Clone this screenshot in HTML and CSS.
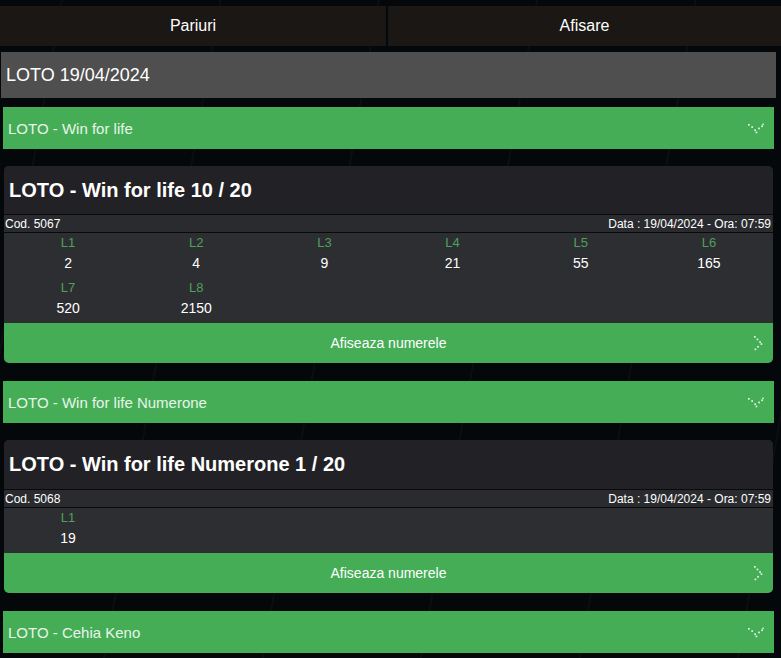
FILE: index.html
```html
<!DOCTYPE html>
<html lang="ro">
<head>
<meta charset="utf-8">
<title>LOTO</title>
<link rel="stylesheet" href="styles.css">
</head>
<body>
<div class="page">
  <nav class="tabs">
    <div class="tab">Pariuri</div>
    <div class="tab">Afisare</div>
  </nav>

  <div class="date-header">LOTO 19/04/2024</div>

  <div class="group group-first">
    <span>LOTO - Win for life</span>
    <svg class="chev-down" width="17" height="11" viewBox="0 0 17 11"><g fill="#e2f6e5"><rect x="1" y="1" width="1.7" height="1.7"/><rect x="4.3" y="3.2" width="1.7" height="1.7"/><rect x="7.3" y="6.4" width="1.7" height="1.7"/><rect x="8.6" y="8.6" width="1.7" height="1.7"/><rect x="11.2" y="4.6" width="1.7" height="1.7"/><rect x="14.3" y="2.4" width="1.7" height="1.7"/><rect x="15.3" y="0.6" width="1.5" height="1.5"/></g></svg>
  </div>

  <section class="card">
    <h2 class="card-title">LOTO - Win for life 10 / 20</h2>
    <div class="info"><span>Cod. 5067</span><span>Data : 19/04/2024 - Ora: 07:59</span></div>
    <div class="grid">
      <div class="cell"><div class="lbl">L1</div><div class="val">2</div></div>
      <div class="cell"><div class="lbl">L2</div><div class="val">4</div></div>
      <div class="cell"><div class="lbl">L3</div><div class="val">9</div></div>
      <div class="cell"><div class="lbl">L4</div><div class="val">21</div></div>
      <div class="cell"><div class="lbl">L5</div><div class="val">55</div></div>
      <div class="cell"><div class="lbl">L6</div><div class="val">165</div></div>
      <div class="cell"><div class="lbl">L7</div><div class="val">520</div></div>
      <div class="cell"><div class="lbl">L8</div><div class="val">2150</div></div>
    </div>
    <div class="show-btn">
      <span class="btn-text">Afiseaza numerele</span>
      <svg class="chev-right" width="10" height="16" viewBox="0 0 10 16"><g fill="#e2f6e5"><rect x="1" y="1" width="1.7" height="1.7"/><rect x="3.6" y="3.6" width="1.7" height="1.7"/><rect x="6.2" y="6.2" width="1.7" height="1.7"/><rect x="7.6" y="8.2" width="1.7" height="1.7"/><rect x="4.2" y="10.9" width="1.7" height="1.7"/><rect x="1.6" y="13.5" width="1.7" height="1.7"/></g></svg>
    </div>
  </section>

  <div class="group group-after-card">
    <span>LOTO - Win for life Numerone</span>
    <svg class="chev-down" width="17" height="11" viewBox="0 0 17 11"><g fill="#e2f6e5"><rect x="1" y="1" width="1.7" height="1.7"/><rect x="4.3" y="3.2" width="1.7" height="1.7"/><rect x="7.3" y="6.4" width="1.7" height="1.7"/><rect x="8.6" y="8.6" width="1.7" height="1.7"/><rect x="11.2" y="4.6" width="1.7" height="1.7"/><rect x="14.3" y="2.4" width="1.7" height="1.7"/><rect x="15.3" y="0.6" width="1.5" height="1.5"/></g></svg>
  </div>

  <section class="card">
    <h2 class="card-title card-title-tall">LOTO - Win for life Numerone 1 / 20</h2>
    <div class="info"><span>Cod. 5068</span><span>Data : 19/04/2024 - Ora: 07:59</span></div>
    <div class="grid">
      <div class="cell"><div class="lbl">L1</div><div class="val">19</div></div>
    </div>
    <div class="show-btn">
      <span class="btn-text">Afiseaza numerele</span>
      <svg class="chev-right" width="10" height="16" viewBox="0 0 10 16"><g fill="#e2f6e5"><rect x="1" y="1" width="1.7" height="1.7"/><rect x="3.6" y="3.6" width="1.7" height="1.7"/><rect x="6.2" y="6.2" width="1.7" height="1.7"/><rect x="7.6" y="8.2" width="1.7" height="1.7"/><rect x="4.2" y="10.9" width="1.7" height="1.7"/><rect x="1.6" y="13.5" width="1.7" height="1.7"/></g></svg>
    </div>
  </section>

  <div class="group group-last">
    <span>LOTO - Cehia Keno</span>
    <svg class="chev-down" width="17" height="11" viewBox="0 0 17 11"><g fill="#e2f6e5"><rect x="1" y="1" width="1.7" height="1.7"/><rect x="4.3" y="3.2" width="1.7" height="1.7"/><rect x="7.3" y="6.4" width="1.7" height="1.7"/><rect x="8.6" y="8.6" width="1.7" height="1.7"/><rect x="11.2" y="4.6" width="1.7" height="1.7"/><rect x="14.3" y="2.4" width="1.7" height="1.7"/><rect x="15.3" y="0.6" width="1.5" height="1.5"/></g></svg>
  </div>
</div>
</body>
</html>
```

FILE: styles.css
```css
* { box-sizing: border-box; }

html, body {
  margin: 0;
  padding: 0;
}

body {
  background-color: #05080b;
  background-image:
    repeating-linear-gradient(100deg, transparent 0 60px, rgba(255,255,255,0.025) 60px 62px, transparent 62px 156px);
  font-family: "Liberation Sans", Arial, sans-serif;
  color: #ffffff;
  width: 781px;
  height: 658px;
  overflow: hidden;
}

.page {
  padding-top: 6px;
}

.tabs {
  display: grid;
  grid-template-columns: 386px 1fr;
  gap: 2px;
  height: 40px;
}

.tab {
  background: #1b1714;
  display: flex;
  align-items: center;
  justify-content: center;
  font-size: 16px;
  color: #ffffff;
}

.date-header {
  margin: 6px 5px 0 1px;
  height: 46px;
  background: #4f4f4f;
  display: flex;
  align-items: center;
  padding-left: 5px;
  font-size: 18px;
  color: #ffffff;
}

.group {
  margin: 0 7px 0 3px;
  height: 42px;
  background: #46ad57;
  display: flex;
  align-items: center;
  justify-content: space-between;
  padding: 0 10px 0 5px;
  font-size: 15px;
  color: #e8f5ea;
}

.group-first { margin-top: 9px; }
.group-after-card { margin-top: 18px; }
.group-last { margin-top: 18px; }

.chev-down { display: block; margin-top: 1px; }

.card {
  margin: 17px 8px 0 4px;
  background: #2d2e32;
  border-radius: 5px;
  overflow: hidden;
}

.card-title {
  margin: 0;
  height: 48px;
  background: #222226;
  display: flex;
  align-items: center;
  padding-left: 5px;
  font-size: 20px;
  font-weight: bold;
  color: #ffffff;
}

.card-title-tall {
  height: 49px;
}

.info {
  height: 19px;
  border-top: 1px solid #0a0a0b;
  border-bottom: 1px solid #0a0a0b;
  background: #2a2b2f;
  display: flex;
  align-items: center;
  justify-content: space-between;
  padding: 0 2px 0 1px;
  font-size: 12px;
  color: #ffffff;
}

.grid {
  display: grid;
  grid-template-columns: repeat(6, 1fr);
  row-gap: 5px;
  padding-bottom: 5px;
}

.cell {
  text-align: center;
}

.lbl {
  height: 20px;
  line-height: 20px;
  font-size: 13px;
  color: #4ea05a;
}

.val {
  height: 20px;
  line-height: 20px;
  font-size: 14px;
  color: #ffffff;
}

.show-btn {
  height: 40px;
  background: #46ad57;
  display: grid;
  grid-template-columns: 1fr auto 1fr;
  align-items: center;
  padding-right: 10px;
  padding-left: 10px;
}

.btn-text {
  grid-column: 2;
  font-size: 14px;
  color: #ffffff;
}

.chev-right {
  grid-column: 3;
  justify-self: end;
  display: block;
}
```
